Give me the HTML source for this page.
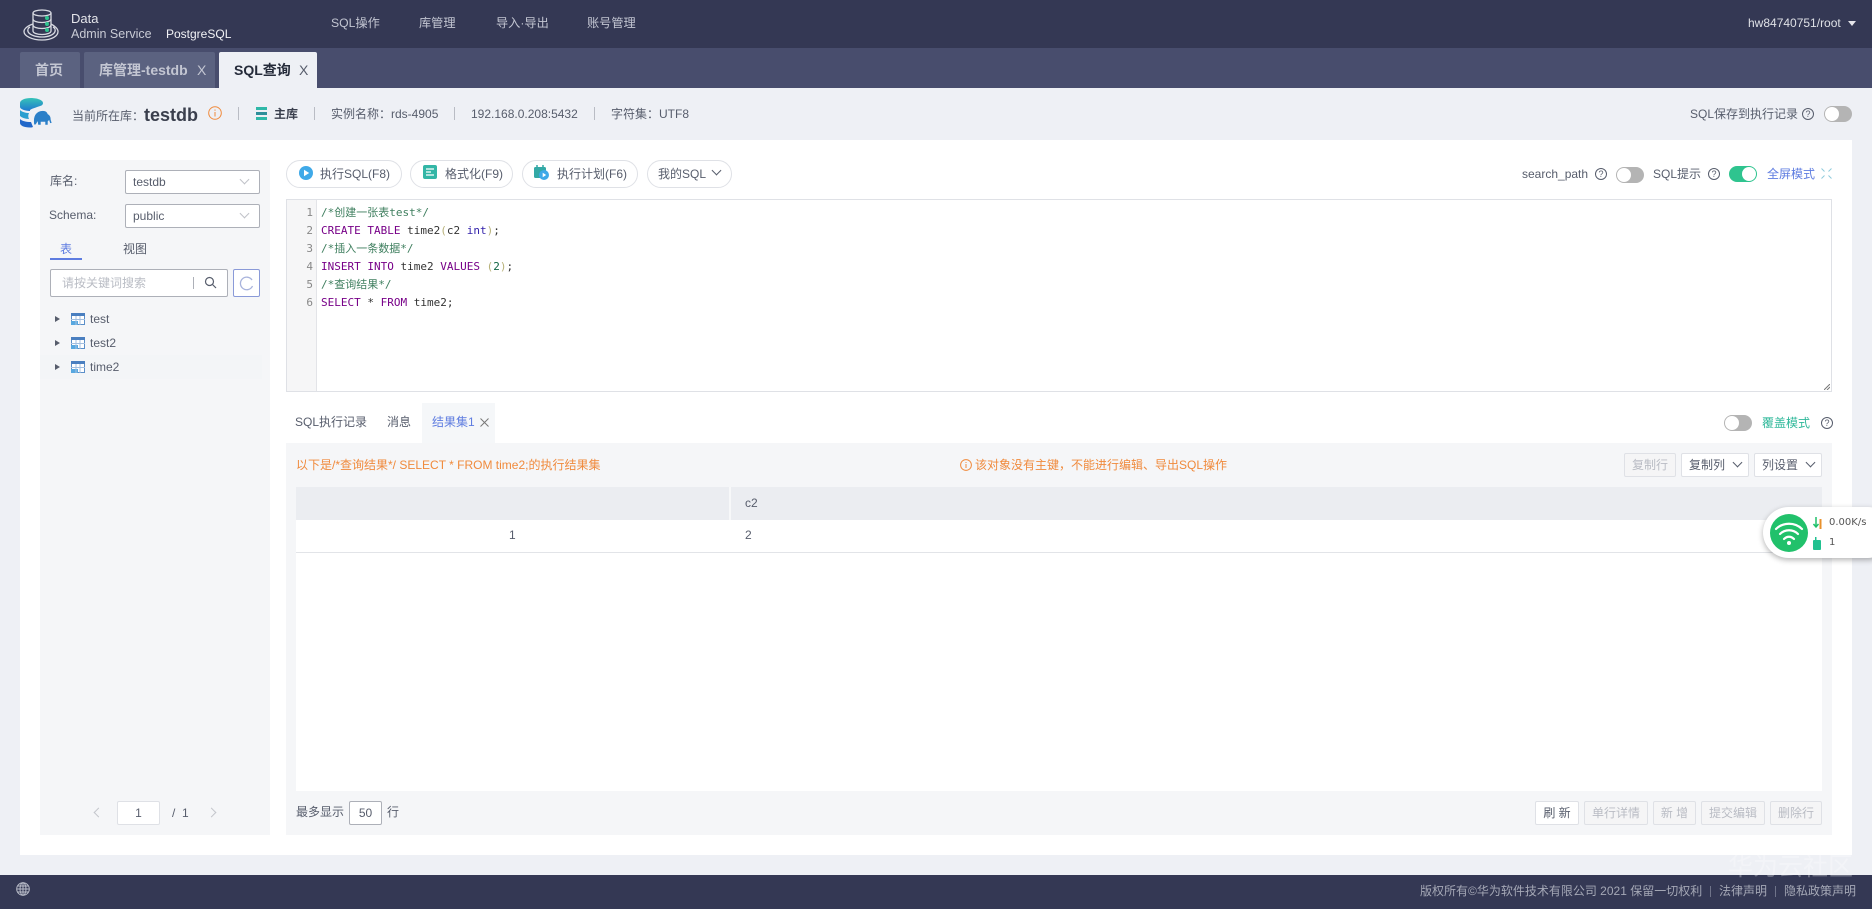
<!DOCTYPE html>
<html lang="zh-CN">
<head>
<meta charset="utf-8">
<title>SQL查询</title>
<style>
*{box-sizing:border-box}
html,body{margin:0;padding:0;width:1872px;height:909px;overflow:hidden;background:#eef0f5;font-family:"Liberation Sans","Noto Sans CJK SC",sans-serif;font-size:12px;color:#575d6c}
.a{position:absolute;white-space:nowrap}
.t{position:absolute;white-space:nowrap;line-height:16px}
.btn{position:absolute;border:1px solid #dfe1e6;border-radius:14px;background:#fff;height:28px;line-height:26px;font-size:12px;color:#575d6c;white-space:nowrap}
.sel{position:absolute;left:125px;width:135px;height:24px;border:1px solid #adb0b8;border-radius:2px;background:#fff;line-height:22px;padding-left:7px;font-size:12px;color:#575d6c}
.chev{position:absolute;width:7px;height:7px;border-right:1px solid #c0c2c8;border-bottom:1px solid #c0c2c8;transform:rotate(45deg)}
.sm{position:absolute;height:24px;border:1px solid #dfe1e6;border-radius:2px;background:#fff;line-height:22px;text-align:center;font-size:12px;color:#575d6c;white-space:nowrap}
.dis{background:#f5f5f6;color:#b9bcc4}
.sw{position:absolute;width:28px;height:16px;border-radius:8px;background:#b4b4b4}
.sw:after{content:"";position:absolute;left:1px;top:1px;width:14px;height:14px;border-radius:50%;background:#fff}
.sw.on{background:#2fc48f}
.sw.on:after{left:13px}
.q{position:absolute;width:12px;height:12px;border:1px solid #575d6c;border-radius:50%;font-size:9px;line-height:10px;text-align:center;color:#575d6c}
.code{position:absolute;left:321px;font-family:"DejaVu Sans Mono","Liberation Mono","Noto Sans CJK SC",monospace;font-size:11px;line-height:18px;white-space:nowrap;color:#333}
.ln{position:absolute;left:286px;width:27px;text-align:right;font-family:"DejaVu Sans Mono","Liberation Mono",monospace;font-size:11px;line-height:18px;color:#888}
.k{color:#770088}.c{color:#3f7f5f}.b{color:#b8b27a}.n{color:#116644}.i{color:#3322aa}
.sep{position:absolute;width:1px;height:13px;background:#b9bcc4;top:107px}
.tab{position:absolute;top:52px;height:36px;background:#5b6280;color:#c3c6d2;font-size:14px;font-weight:bold;line-height:36px;white-space:nowrap;border-radius:2px 2px 0 0}
</style>
</head>
<body>

<!-- Header -->
<div class="a" style="left:0;top:0;width:1872px;height:48px;background:#343854"></div>
<svg class="a" style="left:22px;top:8px" width="40" height="34" viewBox="0 0 40 34" fill="none" stroke="#d8dae2" stroke-width="1.300">
<ellipse cx="20" cy="5" rx="9" ry="3"/><path d="M11 5v18c0 2 4 3.500 9 3.500s9-1.500 9-3.500V5"/><path d="M11 11c0 2 4 3.500 9 3.500s9-1.500 9-3.500M11 17c0 2 4 3.500 9 3.500s9-1.500 9-3.500"/>
<path d="M11 16C5 18 2 21 2 23.500 2 28 10 32 20 32s16-4 16-8.500c0-2.500-3-5.500-7-7.500"/><path d="M8 19c-2 1-2.500 3-2 4.500 1 3 7 5.500 14 5.500s12-2.500 13-5.500c.5-1.500 0-3.500-2-4.500"/>
<circle cx="25" cy="10" r="2" fill="#2fc48f" stroke="none"/><circle cx="25" cy="16" r="2" fill="#2fc48f" stroke="none"/><circle cx="25" cy="22" r="2" fill="#2fc48f" stroke="none"/></svg>
<div class="t" style="left:71px;top:11px;font-size:13px;color:#e4e5ea">Data</div>
<div class="t" style="left:71px;top:26px;font-size:12.500px;color:#c9cbd5">Admin Service</div>
<div class="t" style="left:166px;top:26px;font-size:12px;color:#f2f3f6">PostgreSQL</div>
<div class="t" style="left:331px;top:15px;font-size:12.200px;color:#c3c6d2">SQL操作</div>
<div class="t" style="left:419px;top:15px;font-size:12.200px;color:#c3c6d2">库管理</div>
<div class="t" style="left:496px;top:15px;font-size:12.200px;color:#c3c6d2">导入·导出</div>
<div class="t" style="left:587px;top:15px;font-size:12.200px;color:#c3c6d2">账号管理</div>
<div class="t" style="left:1748px;top:15px;font-size:12px;color:#dfe1e6">hw84740751/root</div>
<div class="a" style="left:1848px;top:21px;width:0;height:0;border-left:4px solid transparent;border-right:4px solid transparent;border-top:5px solid #e4e5ea"></div>

<!-- Tab bar -->
<div class="a" style="left:0;top:48px;width:1872px;height:40px;background:#484d6d"></div>
<div class="tab" style="left:20px;width:60px;padding-left:15px">首页</div>
<div class="tab" style="left:84px;width:131px;padding-left:15px;font-size:14px">库管理-testdb<span style="position:absolute;left:113px;top:0;font-weight:normal;font-size:14px">X</span></div>
<div class="tab" style="left:219px;width:98px;padding-left:15px;background:#eef0f5;color:#252b3a;font-size:14px">SQL查询<span style="position:absolute;left:80px;top:0;font-weight:normal;font-size:14px;color:#575d6c">X</span></div>

<!-- Info bar -->
<svg class="a" style="left:18px;top:98px" width="36" height="32" viewBox="0 0 36 32">
<defs><linearGradient id="g" x1="0" y1="0" x2="0" y2="1"><stop offset="0" stop-color="#36c3b8"/><stop offset="1" stop-color="#1f78d1"/></linearGradient></defs>
<path d="M2 5c0-3 5-5 11-5s12 2 12 5c0 1-.5 1.800-1.500 2.500C20 9 15 10 12 12l0 1c-5 0-10-2-10-4z" fill="url(#g)"/>
<path d="M2 12c2 2 6 3 9 3-1 2-1 4 0 6-4-.2-7-1.200-9-3z" fill="#2a9fd0"/>
<path d="M2 21c2 2 6 3 11 3l2 5c-1 .5-2 .5-3 .5C6 29.500 2 27.500 2 25z" fill="#2167c9"/>
<path d="M16 27c-1-6 0-12 6-14 4-1 7 0 8 3 2 1 3 3 3 6l1 3-2 .5-1-3-1 1v3.500h-3v-3h-4v3h-3l-.5-3-1.500 2.500z" fill="#2a7fc8" stroke="#eef0f5" stroke-width=".6"/></svg>
<div class="t" style="left:72px;top:108px;font-size:12px;color:#575d6c">当前所在库：</div>
<div class="t" style="left:144px;top:106px;font-size:18px;font-weight:bold;color:#3a3f4d;line-height:18px">testdb</div>
<svg class="a" style="left:208px;top:106px" width="14" height="14" viewBox="0 0 14 14" fill="none" stroke="#f08a3c"><circle cx="7" cy="7" r="6.300"/><path d="M7 6v4.500M7 3.500v1.300"/></svg>
<div class="sep" style="left:238px"></div>
<div class="a" style="left:256px;top:107px;width:11px;height:3px;background:#2fb8a8"></div>
<div class="a" style="left:256px;top:112px;width:11px;height:3px;background:#2e8f9a"></div>
<div class="a" style="left:256px;top:117px;width:11px;height:3px;background:#2fb8a8"></div>
<div class="t" style="left:274px;top:106px;font-size:12px;font-weight:bold;color:#3a3f4d">主库</div>
<div class="sep" style="left:314px"></div>
<div class="t" style="left:331px;top:106px;font-size:12px">实例名称：rds-4905</div>
<div class="sep" style="left:454px"></div>
<div class="t" style="left:471px;top:106px;font-size:12px">192.168.0.208:5432</div>
<div class="sep" style="left:594px"></div>
<div class="t" style="left:611px;top:106px;font-size:12px">字符集：UTF8</div>
<div class="t" style="left:1690px;top:106px;font-size:12px">SQL保存到执行记录</div>
<div class="q" style="left:1802px;top:108px">?</div>
<div class="sw" style="left:1824px;top:106px"></div>

<!-- Main white panel -->
<div class="a" style="left:20px;top:140px;width:1832px;height:715px;background:#fff"></div>

<!-- Left sidebar -->
<div class="a" style="left:40px;top:160px;width:230px;height:675px;background:#f5f6f8"></div>
<div class="t" style="left:50px;top:173px;font-size:12px">库名:</div>
<div class="sel" style="top:170px">testdb<span class="chev" style="left:115px;top:5px"></span></div>
<div class="t" style="left:49px;top:207px;font-size:12px">Schema:</div>
<div class="sel" style="top:204px">public<span class="chev" style="left:115px;top:5px"></span></div>
<div class="t" style="left:60px;top:241px;font-size:12px;color:#5e7ce0">表</div>
<div class="a" style="left:50px;top:258px;width:32px;height:2px;background:#5e7ce0"></div>
<div class="t" style="left:123px;top:241px;font-size:12px">视图</div>
<div class="a" style="left:50px;top:269px;width:178px;height:28px;border:1px solid #adb0b8;border-radius:2px;background:#fff"></div>
<div class="t" style="left:62px;top:275px;font-size:12px;color:#b9bcc4">请按关键词搜索</div>
<div class="a" style="left:193px;top:277px;width:1px;height:12px;background:#adb0b8"></div>
<svg class="a" style="left:204px;top:276px" width="13" height="13" viewBox="0 0 13 13" fill="none" stroke="#575d6c" stroke-width="1.200"><circle cx="5.500" cy="5.500" r="4"/><path d="M8.500 8.500l3.500 3.500"/></svg>
<div class="a" style="left:233px;top:269px;width:27px;height:28px;border:1px solid #8a9ad8;border-radius:2px;background:#fff"></div>
<svg class="a" style="left:239px;top:276px" width="15" height="15" viewBox="0 0 15 15" fill="none" stroke="#a8b3dc" stroke-width="1.300"><path d="M13 4A6.300 6.300 0 1 0 13.500 10"/></svg>

<div class="a" style="left:40px;top:355px;width:222px;height:24px;background:#f3f5f7"></div>
<div class="a" style="left:55px;top:316px;width:0;height:0;border-top:3.500px solid transparent;border-bottom:3.500px solid transparent;border-left:5px solid #575d6c"></div>
<div class="a" style="left:55px;top:340px;width:0;height:0;border-top:3.500px solid transparent;border-bottom:3.500px solid transparent;border-left:5px solid #575d6c"></div>
<div class="a" style="left:55px;top:364px;width:0;height:0;border-top:3.500px solid transparent;border-bottom:3.500px solid transparent;border-left:5px solid #575d6c"></div>
<svg class="a" style="left:71px;top:313px" width="14" height="12" viewBox="0 0 14 12"><rect x=".5" y=".5" width="13" height="11" fill="#fff" stroke="#5b8fc9"/><rect x="0" y="0" width="14" height="3" fill="#4a7fc0"/><rect x="0" y="8" width="7" height="4" fill="#58a8e0"/><path d="M5 3v9M9 3v9M0 6.500h14" stroke="#a3bfe0" fill="none"/></svg>
<svg class="a" style="left:71px;top:337px" width="14" height="12" viewBox="0 0 14 12"><rect x=".5" y=".5" width="13" height="11" fill="#fff" stroke="#5b8fc9"/><rect x="0" y="0" width="14" height="3" fill="#4a7fc0"/><rect x="0" y="8" width="7" height="4" fill="#58a8e0"/><path d="M5 3v9M9 3v9M0 6.500h14" stroke="#a3bfe0" fill="none"/></svg>
<svg class="a" style="left:71px;top:361px" width="14" height="12" viewBox="0 0 14 12"><rect x=".5" y=".5" width="13" height="11" fill="#fff" stroke="#5b8fc9"/><rect x="0" y="0" width="14" height="3" fill="#4a7fc0"/><rect x="0" y="8" width="7" height="4" fill="#58a8e0"/><path d="M5 3v9M9 3v9M0 6.500h14" stroke="#a3bfe0" fill="none"/></svg>
<div class="t" style="left:90px;top:311px;font-size:12px">test</div>
<div class="t" style="left:90px;top:335px;font-size:12px">test2</div>
<div class="t" style="left:90px;top:359px;font-size:12px">time2</div>

<!-- Left pager -->
<div class="chev" style="left:95px;top:809px;transform:rotate(135deg);border-color:#c4c6cc"></div>
<div class="sm" style="left:117px;top:801px;width:43px;color:#575d6c">1</div>
<div class="t" style="left:172px;top:805px;font-size:12px">/&nbsp;&nbsp;1</div>
<div class="chev" style="left:208px;top:809px;transform:rotate(-45deg);border-color:#c4c6cc"></div>

<!-- SQL toolbar -->
<div class="btn" style="left:286px;top:160px;width:116px;padding-left:33px">执行SQL(F8)</div>
<svg class="a" style="left:299px;top:166px" width="14" height="14" viewBox="0 0 14 14"><circle cx="7" cy="7" r="7" fill="#3fa9e8"/><path d="M5 3.800v6.400L10.200 7z" fill="#fff"/></svg>
<div class="btn" style="left:410px;top:160px;width:103px;padding-left:34px">格式化(F9)</div>
<svg class="a" style="left:423px;top:165px" width="14" height="14" viewBox="0 0 14 14"><rect width="14" height="14" rx="2" fill="#33b6a6"/><path d="M3 4h8M3 7h5M3 10h8" stroke="#fff" fill="none" stroke-width="1.200"/></svg>
<div class="btn" style="left:522px;top:160px;width:116px;padding-left:34px">执行计划(F6)</div>
<svg class="a" style="left:534px;top:165px" width="15" height="15" viewBox="0 0 15 15"><rect x="0" y="2" width="12" height="11" rx="1.500" fill="#33a9a6"/><path d="M3 0v3M9 0v3" stroke="#33a9a6" stroke-width="1.500"/><circle cx="10" cy="10" r="5" fill="#3fa9e8"/><path d="M8.700 7.800v4.400L12.200 10z" fill="#fff"/></svg>
<div class="btn" style="left:647px;top:160px;width:85px;padding-left:10px">我的SQL<span class="chev" style="left:65px;top:6px;border-color:#575d6c"></span></div>

<div class="t" style="left:1522px;top:166px;font-size:12px">search_path</div>
<div class="q" style="left:1595px;top:168px">?</div>
<div class="sw" style="left:1616px;top:167px"></div>
<div class="t" style="left:1653px;top:166px;font-size:12px">SQL提示</div>
<div class="q" style="left:1708px;top:168px">?</div>
<div class="sw on" style="left:1729px;top:166px"></div>
<div class="t" style="left:1767px;top:166px;font-size:12px;color:#5e7ce0">全屏模式</div>
<svg class="a" style="left:1821px;top:168px" width="11" height="11" viewBox="0 0 11 11" fill="none" stroke="#8fcbdc"><path d="M.5.500l3 3M10.500.5l-3 3M10.500 10.500l-3-3M.5 10.500l3-3"/></svg>

<!-- Editor -->
<div class="a" style="left:286px;top:199px;width:1546px;height:193px;border:1px solid #dfe1e6;background:#fff"></div>
<div class="a" style="left:287px;top:200px;width:30px;height:191px;background:#f6f6f7;border-right:1px solid #e3e4e8"></div>
<div class="ln" style="top:204px">1</div>
<div class="ln" style="top:222px">2</div>
<div class="ln" style="top:240px">3</div>
<div class="ln" style="top:258px">4</div>
<div class="ln" style="top:276px">5</div>
<div class="ln" style="top:294px">6</div>
<div class="code c" style="top:204px">/*创建一张表test*/</div>
<div class="code" style="top:222px"><span class="k">CREATE</span> <span class="k">TABLE</span> time2<span class="b">(</span>c2 <span class="i">int</span><span class="b">)</span>;</div>
<div class="code c" style="top:240px">/*插入一条数据*/</div>
<div class="code" style="top:258px"><span class="k">INSERT</span> <span class="k">INTO</span> time2 <span class="k">VALUES</span> <span class="b">(</span><span class="n">2</span><span class="b">)</span>;</div>
<div class="code c" style="top:276px">/*查询结果*/</div>
<div class="code" style="top:294px"><span class="k">SELECT</span> * <span class="k">FROM</span> time2;</div>
<svg class="a" style="left:1824px;top:384px" width="6" height="6" viewBox="0 0 6 6" fill="none" stroke="#777"><path d="M0 6l6-6M3 6l3-3"/></svg>

<!-- Result tabs -->
<div class="t" style="left:295px;top:414px;font-size:12px">SQL执行记录</div>
<div class="t" style="left:387px;top:414px;font-size:12px">消息</div>
<div class="a" style="left:422px;top:403px;width:73px;height:40px;background:#f5f7f9"></div>
<div class="t" style="left:432px;top:414px;font-size:12px;color:#5e7ce0">结果集1</div>
<svg class="a" style="left:480px;top:418px" width="9" height="9" viewBox="0 0 9 9" fill="none" stroke="#777"><path d="M.5.500l8 8M8.500.5l-8 8"/></svg>
<div class="sw" style="left:1724px;top:415px"></div>
<div class="t" style="left:1762px;top:415px;font-size:12px;color:#2fb89a">覆盖模式</div>
<div class="q" style="left:1821px;top:417px">?</div>

<!-- Result area -->
<div class="a" style="left:286px;top:443px;width:1546px;height:392px;background:#f5f6f8"></div>
<div class="t" style="left:296px;top:457px;font-size:12px;color:#f08a3c">以下是/*查询结果*/ SELECT * FROM time2;的执行结果集</div>
<svg class="a" style="left:960px;top:459px" width="12" height="12" viewBox="0 0 12 12" fill="none" stroke="#f08a3c"><circle cx="6" cy="6" r="5.400"/><path d="M6 5v4M6 3v1"/></svg>
<div class="t" style="left:975px;top:457px;font-size:12px;color:#f08a3c">该对象没有主键，不能进行编辑、导出SQL操作</div>
<div class="sm dis" style="left:1624px;top:453px;width:52px">复制行</div>
<div class="sm" style="left:1681px;top:453px;width:68px;padding-right:16px;text-align:center">复制列<span class="chev" style="left:52px;top:5px;border-color:#575d6c"></span></div>
<div class="sm" style="left:1754px;top:453px;width:68px;padding-right:16px;text-align:center">列设置<span class="chev" style="left:52px;top:5px;border-color:#575d6c"></span></div>

<div class="a" style="left:296px;top:487px;width:1526px;height:304px;background:#fff"></div>
<div class="a" style="left:296px;top:487px;width:1526px;height:33px;background:#ebedf1"></div>
<div class="a" style="left:729px;top:487px;width:2px;height:33px;background:#f7f8f9"></div>
<div class="a" style="left:296px;top:552px;width:1526px;height:1px;background:#e2e4e8"></div>
<div class="t" style="left:745px;top:495px;font-size:12px">c2</div>
<div class="t" style="left:509px;top:527px;font-size:12px">1</div>
<div class="t" style="left:745px;top:527px;font-size:12px">2</div>

<!-- Bottom bar -->
<div class="t" style="left:296px;top:804px;font-size:12px">最多显示</div>
<div class="sm" style="left:349px;top:801px;width:33px;border-color:#adb0b8">50</div>
<div class="t" style="left:387px;top:804px;font-size:12px">行</div>
<div class="sm" style="left:1535px;top:801px;width:44px">刷 新</div>
<div class="sm dis" style="left:1584px;top:801px;width:64px">单行详情</div>
<div class="sm dis" style="left:1653px;top:801px;width:43px">新 增</div>
<div class="sm dis" style="left:1701px;top:801px;width:64px">提交编辑</div>
<div class="sm dis" style="left:1770px;top:801px;width:52px">删除行</div>

<!-- Network widget -->
<div class="a" style="left:1763px;top:507px;width:130px;height:51px;border-radius:26px;background:#fff;box-shadow:0 2px 6px rgba(0,0,0,.3)"></div>
<svg class="a" style="left:1770px;top:514px" width="38" height="38" viewBox="0 0 38 38"><circle cx="19" cy="19" r="19" fill="#21c16b"/><g fill="none" stroke="#fff" stroke-width="2.200" stroke-linecap="round"><path d="M6 15c7-7 19-7 26 0"/><path d="M10 20c5-5 13-5 18 0"/><path d="M14 25c3-3 7-3 10 0"/></g><circle cx="19" cy="29" r="2" fill="#fff"/></svg>
<svg class="a" style="left:1813px;top:517px" width="10" height="12" viewBox="0 0 10 12"><path d="M3 0v9M.5 7l2.500 3L5.500 7" stroke="#21c16b" fill="none" stroke-width="1.500"/><path d="M7.500 12V2" stroke="#e8912d" stroke-width="2"/></svg>
<svg class="a" style="left:1813px;top:537px" width="9" height="13" viewBox="0 0 9 13"><rect x="0" y="3" width="8" height="10" rx="1" fill="#21c190"/><rect x="2" y="0" width="1.500" height="4" fill="#21c190"/></svg>
<div class="t" style="left:1829px;top:515px;font-family:'DejaVu Sans','Liberation Sans',sans-serif;font-size:10px;color:#555">0.00K/s</div>
<div class="t" style="left:1829px;top:535px;font-family:'DejaVu Sans','Liberation Sans',sans-serif;font-size:10px;color:#555">1</div>

<!-- Footer -->
<div class="a" style="left:0;top:875px;width:1872px;height:34px;background:#343854"></div>
<svg class="a" style="left:16px;top:882px" width="14" height="14" viewBox="0 0 14 14" fill="none" stroke="#b9bcc8"><circle cx="7" cy="7" r="6.300"/><ellipse cx="7" cy="7" rx="3" ry="6.300"/><path d="M1 7h12M1.800 4h10.400M1.800 10h10.400M7 .7v12.600"/></svg>
<div class="t" style="left:1420px;top:883px;font-size:12px;color:#a5a8b6">版权所有©华为软件技术有限公司 2021 保留一切权利</div>
<div class="a" style="left:1710px;top:886px;width:1px;height:11px;background:#6f7389"></div>
<div class="t" style="left:1719px;top:883px;font-size:12px;color:#a5a8b6">法律声明</div>
<div class="a" style="left:1775px;top:886px;width:1px;height:11px;background:#6f7389"></div>
<div class="t" style="left:1784px;top:883px;font-size:12px;color:#a5a8b6">隐私政策声明</div>
<div class="t" style="left:1728px;top:852px;font-size:25px;line-height:30px;color:rgba(255,255,255,.3)">华为云社区</div>

</body>
</html>
